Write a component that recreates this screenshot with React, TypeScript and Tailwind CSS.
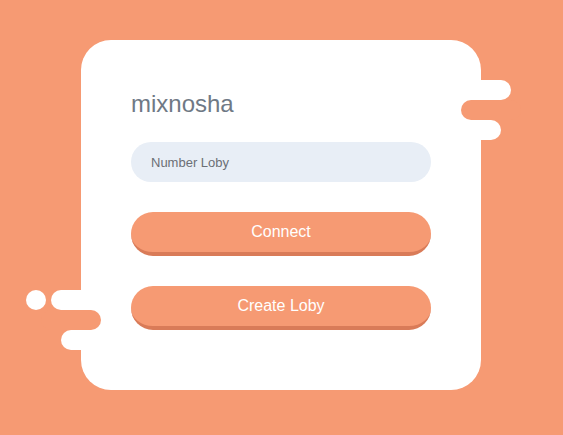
import React from 'react';

export default function App() {
  return (
    <div className="min-h-[435px] w-full bg-[#f69a73] pl-[81px] pt-[40px] font-['Liberation_Sans',Arial,sans-serif]">
      <div className="relative w-[400px] h-[350px] rounded-[30px] bg-white">
        {/* right side decoration */}
        <span className="absolute left-[380px] top-[40px] h-[20px] w-[50px] rounded-full bg-white" />
        <span className="absolute left-[380px] top-[60px] h-[20px] w-[60px] rounded-full bg-[#f69a73]" />
        <span className="absolute left-[370px] top-[80px] h-[20px] w-[50px] rounded-full bg-white" />

        {/* left side decoration */}
        <span className="absolute left-[-55px] top-[250px] h-[20px] w-[20px] rounded-full bg-white" />
        <span className="absolute left-[-30px] top-[250px] h-[20px] w-[50px] rounded-full bg-white" />
        <span className="absolute left-[-40px] top-[270px] h-[20px] w-[60px] rounded-full bg-[#f69a73]" />
        <span className="absolute left-[-20px] top-[290px] h-[20px] w-[50px] rounded-full bg-white" />

        <div className="relative flex flex-col px-[50px] pt-[50px]">
          <h1 className="text-[24px] leading-[28px] text-[#6f7985] mb-[24px]">mixnosha</h1>
          <input
            placeholder="Number Loby"
            className="h-[40px] w-[300px] rounded-full bg-[#e8eef6] px-[20px] text-[13px] text-[#555] placeholder:text-[#6b6f75] outline-none"
          />
          <button className="mt-[30px] h-[44px] w-[300px] rounded-full border-b-4 border-[#d97b58] bg-[#f69a73] text-[16px] text-white">
            Connect
          </button>
          <button className="mt-[30px] h-[44px] w-[300px] rounded-full border-b-4 border-[#d97b58] bg-[#f69a73] text-[16px] text-white">
            Create Loby
          </button>
        </div>
      </div>
    </div>
  );
}
